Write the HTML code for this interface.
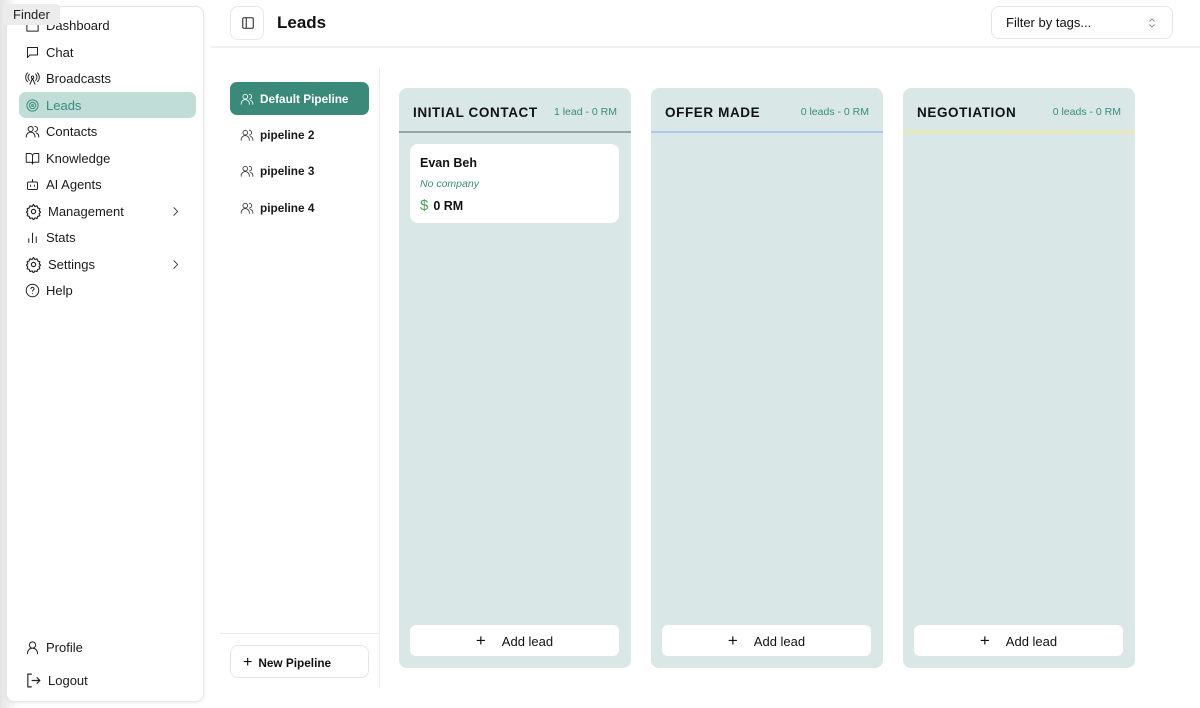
<!DOCTYPE html>
<html><head><meta charset="utf-8"><style>
*{box-sizing:border-box;margin:0;padding:0}
body{width:1200px;height:708px;overflow:hidden;background:#fff;font-family:"Liberation Sans",sans-serif;color:#111;position:relative}
.shade{position:absolute;left:0;top:0;width:18px;height:708px;background:linear-gradient(90deg,#e4e4e4,#fff)}
.side{position:absolute;left:6px;top:6px;width:198px;height:696px;background:#fff;border:1px solid #e6e6e6;border-radius:8px;box-shadow:0 1px 3px rgba(0,0,0,.08)}
.finder{position:absolute;left:3px;top:4px;width:57px;height:21px;background:#ececec;border-radius:4px;font-size:13px;line-height:21px;padding-left:10px;color:#222;z-index:5}
.nav{position:absolute;left:13px;height:26px;width:177px;font-size:13px;display:flex;align-items:center;padding-left:6px;color:#1a1a1a;border-radius:7px}
.nav svg{width:15px;height:15px;margin-right:6px;fill:none;stroke:#222;stroke-width:1.6;stroke-linecap:round;stroke-linejoin:round}
.nav.act{background:#c0ddd8;color:#3a8b7c}
.nav.act svg{stroke:#3a8b7c}
.chev{position:absolute;right:8px;top:7px}
.top{position:absolute;left:211px;top:0;right:0;height:48px;border-bottom:2px solid #f0f0f0}
.tbtn{position:absolute;left:230px;top:6px;width:34px;height:34px;border:1px solid #e8e8e8;border-radius:8px}
.title{position:absolute;left:277px;top:13px;font-size:17px;font-weight:bold}
.filter{position:absolute;left:991px;top:6px;width:182px;height:33px;border:1px solid #e6e6e6;border-radius:8px;font-size:13px;padding:8px 0 0 14px}
.pipes{position:absolute;left:220px;top:68px;width:160px;height:620px;border-right:1px solid #ececec}
.pipe{position:absolute;left:10px;width:139px;height:33px;border-radius:7px;font-size:11.8px;display:flex;align-items:center;padding-left:10px;font-weight:bold;color:#1a1a1a}
.pipe svg{width:14px;height:14px;margin-right:6px;fill:none;stroke:#333;stroke-width:1.5;stroke-linecap:round}
.pipe.act{background:#3a8979;color:#fff}
.pipe.act svg{stroke:#fff}
.newp{position:absolute;left:10px;top:577px;width:139px;height:33px;border:1px solid #e6e6e6;border-radius:8px;font-size:11.8px;padding:8px 0 0 12px;font-weight:bold}
.hl{position:absolute;left:220px;top:633px;width:159px;border-top:1px solid #ececec}
.col{position:absolute;top:88px;width:232px;height:580px;background:#d9e8e6;border-radius:8px}
.ch{height:45px;border-bottom:2px solid;display:flex;justify-content:space-between;align-items:center;padding:5px 14px 0 14px}
.ch b{font-size:13.5px;letter-spacing:.6px}
.ch span{font-size:10.5px;color:#3a8b7c}
.card{position:absolute;left:11px;top:56px;width:209px;height:79px;background:#fff;border-radius:8px;padding:12px 10px}
.add{position:absolute;left:11px;top:537px;width:209px;height:31px;background:#fff;border-radius:6px;font-size:13px;text-align:center;line-height:31px}
</style></head><body>
<div class="shade"></div>
<div class="finder">Finder</div>
<div class="side"></div>
<div class="nav" style="top:12px;left:19px"><svg viewBox="0 0 24 24"><path d="M3 10l9-7 9 7v11H3z"/></svg>Dashboard</div>
<div class="nav" style="top:39px;left:19px"><svg viewBox="0 0 24 24"><path d="M4 4h16v12H8l-4 4z"/></svg>Chat</div>
<div class="nav" style="top:65px;left:19px"><svg viewBox="0 0 24 24"><circle cx="12" cy="10" r="2"/><path d="M12 12l-4 9M12 12l4 9M7 5a7 7 0 000 10M17 5a7 7 0 010 10M4 3a10 10 0 000 14M20 3a10 10 0 010 14"/></svg>Broadcasts</div>
<div class="nav act" style="top:92px;left:19px"><svg viewBox="0 0 24 24"><circle cx="12" cy="12" r="9"/><circle cx="12" cy="12" r="5"/><circle cx="12" cy="12" r="1.5"/></svg>Leads</div>
<div class="nav" style="top:118px;left:19px"><svg viewBox="0 0 24 24"><circle cx="9" cy="8" r="4"/><path d="M2 21v-1a6 6 0 0114 0v1M16 4a4 4 0 010 8M22 21v-1a6 6 0 00-4-5.6"/></svg>Contacts</div>
<div class="nav" style="top:145px;left:19px"><svg viewBox="0 0 24 24"><path d="M2 4h6a4 4 0 014 4v13a3 3 0 00-3-3H2zM22 4h-6a4 4 0 00-4 4v13a3 3 0 013-3h7z"/></svg>Knowledge</div>
<div class="nav" style="top:171px;left:19px"><svg viewBox="0 0 24 24"><rect x="4" y="8" width="16" height="12" rx="2"/><path d="M12 8V4M9 13v2M15 13v2"/></svg>AI Agents</div>
<div class="nav" style="top:198px;left:19px"><svg viewBox="0 0 24 24" style="width:17px;height:17px"><circle cx="12" cy="12" r="3"/><path d="M12 2l2 3 3-1 1 3 3 1-1 3 2 2-2 2 1 3-3 1-1 3-3-1-2 3-2-3-3 1-1-3-3-1 1-3-2-2 2-2-1-3 3-1 1-3 3 1z"/></svg>Management<svg class="chev" viewBox="0 0 24 24" style="width:13px;height:13px"><path d="M9 5l7 7-7 7"/></svg></div>
<div class="nav" style="top:224px;left:19px"><svg viewBox="0 0 24 24"><path d="M6 20v-6M12 20V5M18 20v-9"/></svg>Stats</div>
<div class="nav" style="top:251px;left:19px"><svg viewBox="0 0 24 24" style="width:17px;height:17px"><circle cx="12" cy="12" r="3"/><path d="M12 2l2 3 3-1 1 3 3 1-1 3 2 2-2 2 1 3-3 1-1 3-3-1-2 3-2-3-3 1-1-3-3-1 1-3-2-2 2-2-1-3 3-1 1-3 3 1z"/></svg>Settings<svg class="chev" viewBox="0 0 24 24" style="width:13px;height:13px"><path d="M9 5l7 7-7 7"/></svg></div>
<div class="nav" style="top:277px;left:19px"><svg viewBox="0 0 24 24"><circle cx="12" cy="12" r="10"/><path d="M9.5 9a2.5 2.5 0 115 .5c0 1.5-2.5 2-2.5 3.5M12 17h.01"/></svg>Help</div>
<div class="nav" style="top:634px;left:19px"><svg viewBox="0 0 24 24"><circle cx="12" cy="8" r="5"/><path d="M4 22v-1a8 8 0 0116 0v1"/></svg>Profile</div>
<div class="nav" style="top:667px;left:19px"><svg viewBox="0 0 24 24" style="width:17px;height:17px"><path d="M9 3H4v18h5M10 12h11M17 8l4 4-4 4"/></svg>Logout</div>

<div class="top"></div>
<div class="tbtn"><svg viewBox="0 0 24 24" width="14" height="14" style="position:absolute;left:10px;top:9px" fill="none" stroke="#222" stroke-width="1.8"><rect x="3" y="3" width="18" height="18" rx="2"/><path d="M9 3v18"/></svg></div>
<div class="title">Leads</div>
<div class="filter">Filter by tags...<svg viewBox="0 0 24 24" width="12" height="14" style="position:absolute;right:14px;top:9px" fill="none" stroke="#888" stroke-width="1.8"><path d="M7 9l5-5 5 5M7 15l5 5 5-5"/></svg></div>

<div class="pipes">
<div class="pipe act" style="top:14px"><svg viewBox="0 0 24 24"><circle cx="9" cy="8" r="4"/><path d="M2 21v-1a6 6 0 0114 0v1M16 4a4 4 0 010 8M22 21v-1a6 6 0 00-4-5.6"/></svg>Default Pipeline</div>
<div class="pipe" style="top:50px"><svg viewBox="0 0 24 24"><circle cx="9" cy="8" r="4"/><path d="M2 21v-1a6 6 0 0114 0v1M16 4a4 4 0 010 8M22 21v-1a6 6 0 00-4-5.6"/></svg>pipeline 2</div>
<div class="pipe" style="top:86px"><svg viewBox="0 0 24 24"><circle cx="9" cy="8" r="4"/><path d="M2 21v-1a6 6 0 0114 0v1M16 4a4 4 0 010 8M22 21v-1a6 6 0 00-4-5.6"/></svg>pipeline 3</div>
<div class="pipe" style="top:123px"><svg viewBox="0 0 24 24"><circle cx="9" cy="8" r="4"/><path d="M2 21v-1a6 6 0 0114 0v1M16 4a4 4 0 010 8M22 21v-1a6 6 0 00-4-5.6"/></svg>pipeline 4</div>
<div class="newp"><span style="font-weight:normal;font-size:16px;margin-right:6px">+</span>New Pipeline</div>
</div>
<div class="hl"></div>

<div class="col" style="left:399px"><div class="ch" style="border-color:#9aa5a3"><b>INITIAL CONTACT</b><span>1 lead - 0 RM</span></div>
<div class="card"><div style="font-size:12.5px;font-weight:bold">Evan Beh</div><div style="font-size:10.5px;font-style:italic;color:#3a8b7c;margin-top:8px">No company</div><div style="font-size:12.5px;font-weight:bold;margin-top:7px"><span style="color:#4aa05a;font-weight:normal;font-size:15px;margin-right:5px">$</span>0 RM</div></div>
<div class="add"><span style="font-size:17px;margin-right:16px">+</span>Add lead</div></div>
<div class="col" style="left:651px"><div class="ch" style="border-color:#a9c9f0"><b>OFFER MADE</b><span>0 leads - 0 RM</span></div><div class="add"><span style="font-size:17px;margin-right:16px">+</span>Add lead</div></div>
<div class="col" style="left:903px"><div class="ch" style="border-color:#f2e8a0"><b>NEGOTIATION</b><span>0 leads - 0 RM</span></div><div class="add"><span style="font-size:17px;margin-right:16px">+</span>Add lead</div></div>
</body></html>
